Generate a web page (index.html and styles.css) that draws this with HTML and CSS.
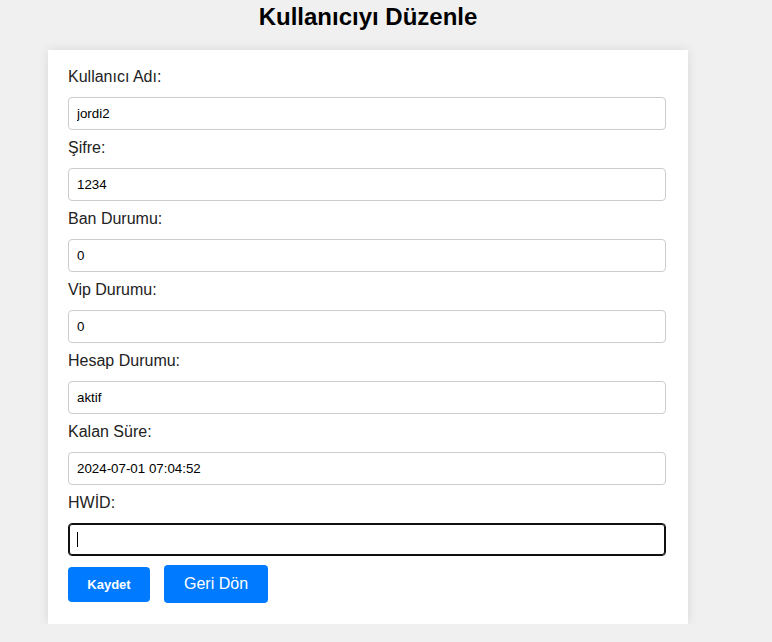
FILE: index.html
```html
<!DOCTYPE html>
<html lang="tr">
<head>
<meta charset="utf-8">
<title>Kullanıcıyı Düzenle</title>
<link rel="stylesheet" href="styles.css">
</head>
<body>
<div class="page">
  <h1 class="title">Kullanıcıyı Düzenle</h1>
  <form class="card">
    <label class="field-label">Kullanıcı Adı:</label>
    <input class="field-input" type="text" value="jordi2">
    <label class="field-label">Şifre:</label>
    <input class="field-input" type="text" value="1234">
    <label class="field-label">Ban Durumu:</label>
    <input class="field-input" type="text" value="0">
    <label class="field-label">Vip Durumu:</label>
    <input class="field-input" type="text" value="0">
    <label class="field-label">Hesap Durumu:</label>
    <input class="field-input" type="text" value="aktif">
    <label class="field-label">Kalan Süre:</label>
    <input class="field-input" type="text" value="2024-07-01 07:04:52">
    <label class="field-label">HWİD:</label>
    <div class="focus-wrap">
      <input class="field-input field-focused" type="text" value="">
      <span class="caret"></span>
    </div>
    <div class="actions">
      <button class="btn-save" type="button">Kaydet</button>
      <a class="btn-back" href="#">Geri Dön</a>
    </div>
  </form>
</div>
</body>
</html>
```

FILE: styles.css
```css
* { box-sizing: border-box; }

body {
  margin: 0;
  background: #f0f0f0;
  font-family: "Liberation Sans", Arial, sans-serif;
  color: #333;
}

.page {
  width: 640px;
  margin-left: 48px;
}

.title {
  margin: 3px 0 19px;
  font-size: 24px;
  line-height: 28px;
  font-weight: bold;
  color: #000;
  text-align: center;
}

.card {
  background: #fff;
  padding: 18px 20px 21px;
  box-shadow: 0 0 10px rgba(0, 0, 0, 0.1);
}

.field-label {
  display: block;
  font-size: 16px;
  line-height: 18px;
  margin-bottom: 11px;
  color: #222;
}

.field-input {
  display: block;
  width: calc(100% - 2px);
  height: 33px;
  padding: 0 8px;
  margin: 0 0 9px;
  border: 1px solid #ccc;
  border-radius: 4px;
  font-family: "Liberation Sans", Arial, sans-serif;
  font-size: 13.33px;
  color: #000;
  background: #fff;
  outline: none;
}

.focus-wrap {
  position: relative;
}

.field-focused {
  border-color: #101010;
  box-shadow: inset 0 0 0 1px #101010;
}

.caret {
  position: absolute;
  left: 9px;
  top: 9px;
  width: 1px;
  height: 15px;
  background: #000;
}

.actions {
  display: flex;
  align-items: center;
  gap: 14px;
  margin-top: 1px;
}

.btn-save {
  width: 82px;
  height: 35px;
  padding: 0;
  border: none;
  border-radius: 4px;
  background: #007bff;
  color: #fff;
  font-family: "Liberation Sans", Arial, sans-serif;
  font-size: 13px;
  font-weight: bold;
}

.btn-back {
  display: inline-block;
  padding: 10px 20px;
  border-radius: 4px;
  background: #007bff;
  color: #fff;
  font-size: 16px;
  line-height: 18px;
  text-decoration: none;
}
```
